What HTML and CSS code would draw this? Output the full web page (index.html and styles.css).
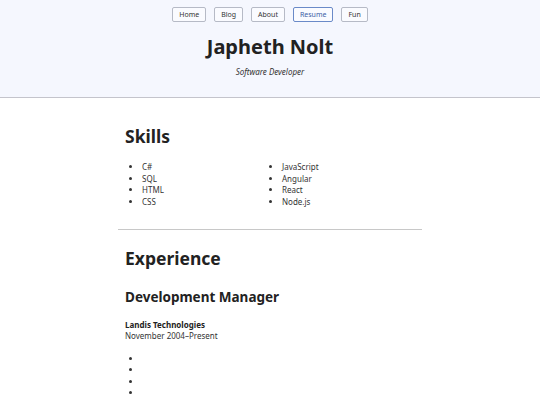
FILE: index.html
```html
<!DOCTYPE html>
<html lang="en">
<head>
    <meta charset="UTF-8">
    <meta name="viewport" content="width=device-width, initial-scale=1.0">
    <title>Japheth Nolt - Resume</title>
    <link rel="stylesheet" href="styles.css">
</head>
<body>
    <header class="site-header">
        <nav class="nav">
            <a class="nav-btn" href="#">Home</a>
            <a class="nav-btn" href="#">Blog</a>
            <a class="nav-btn" href="#">About</a>
            <a class="nav-btn active" href="#">Resume</a>
            <a class="nav-btn" href="#">Fun</a>
        </nav>
        <h1>Japheth Nolt</h1>
        <div class="tagline">Software Developer</div>
    </header>
    <main class="container">
        <section class="skills">
            <h2>Skills</h2>
            <ul class="skill-list">
                <li>C#</li>
                <li>SQL</li>
                <li>HTML</li>
                <li>CSS</li>
                <li>JavaScript</li>
                <li>Angular</li>
                <li>React</li>
                <li>Node.js</li>
            </ul>
        </section>
        <hr>
        <section class="experience">
            <h2>Experience</h2>
            <h3>Development Manager</h3>
            <div class="company">Landis Technologies</div>
            <div class="period">November 2004–Present</div>
            <ul class="duties">
                <li></li>
                <li></li>
                <li></li>
                <li></li>
            </ul>
        </section>
    </main>
</body>
</html>
```

FILE: styles.css
```css
body {
    margin: 0;
    font-family: "Noto Sans", "Open Sans", sans-serif;
    color: #333;
    background-color: #fff;
}
.site-header {
    background-color: #f5f7fe;
    border-bottom: 1px solid #c4c4cc;
    padding: 7px 0 20px;
    text-align: center;
}
.nav {
    display: flex;
    justify-content: center;
    gap: 8px;
}
.nav-btn {
    display: block;
    font-size: 7px;
    line-height: 9px;
    padding: 2px 6px;
    border: 1px solid #b6bac6;
    border-radius: 2px;
    background-color: #fafbff;
    color: #333;
    text-decoration: none;
}
.nav-btn.active {
    border-color: #6a8ac8;
    color: #3d5ea6;
}
.site-header h1 {
    margin: 12px 0 0;
    font-size: 20px;
    line-height: 26px;
    color: #222;
}
.tagline {
    margin-top: 6px;
    font-size: 8px;
    line-height: 11px;
    font-style: italic;
    color: #333;
}
.container {
    width: 290px;
    margin: 0 auto;
    padding: 0 7px;
}
h2 {
    margin: 0;
    font-size: 17.5px;
    line-height: 22px;
    color: #222;
}
.skills h2 {
    margin-top: 27px;
}
ul {
    margin: 0;
    padding-left: 17px;
    font-size: 8px;
    line-height: 11.5px;
}
.skill-list {
    margin-top: 14px;
    columns: 2;
    column-gap: 7px;
}
hr {
    border: none;
    border-top: 1px solid #c8c8c8;
    margin: 22px -7px 0;
}
.experience h2 {
    margin-top: 17px;
}
h3 {
    margin: 19px 0 0;
    font-size: 13.5px;
    line-height: 18px;
    color: #222;
}
.company {
    margin-top: 13px;
    font-size: 8px;
    line-height: 11px;
    font-weight: bold;
    color: #222;
}
.period {
    font-size: 8px;
    line-height: 11.5px;
}
.duties {
    margin-top: 11px;
}
.duties li {
    height: 11.5px;
}
```
